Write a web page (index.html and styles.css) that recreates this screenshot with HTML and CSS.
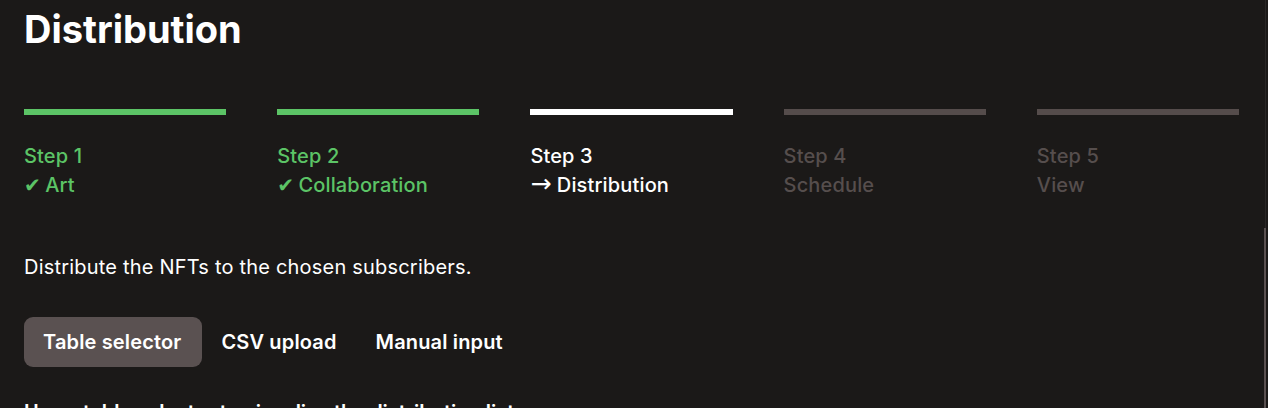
FILE: index.html
```html
<!DOCTYPE html>
<html lang="en">
<head>
<meta charset="utf-8">
<title>Distribution</title>
<link rel="stylesheet" href="styles.css">
</head>
<body>
<main class="page">
  <h1 class="title">Distribution</h1>
  <ol class="steps">
    <li class="step done">
      <span class="bar"></span>
      <span class="label">Step 1</span>
      <span class="name"><span class="mark">✔</span> Art</span>
    </li>
    <li class="step done">
      <span class="bar"></span>
      <span class="label">Step 2</span>
      <span class="name"><span class="mark">✔</span> Collaboration</span>
    </li>
    <li class="step current">
      <span class="bar"></span>
      <span class="label">Step 3</span>
      <span class="name"><span class="arrow">→</span> Distribution</span>
    </li>
    <li class="step todo">
      <span class="bar"></span>
      <span class="label">Step 4</span>
      <span class="name">Schedule</span>
    </li>
    <li class="step todo">
      <span class="bar"></span>
      <span class="label">Step 5</span>
      <span class="name">View</span>
    </li>
  </ol>
  <p class="desc">Distribute the NFTs to the chosen subscribers.</p>
  <div class="tabs">
    <button class="tab active">Table selector</button>
    <button class="tab">CSV upload</button>
    <button class="tab">Manual input</button>
  </div>
  <p class="hint">Use a table selector to visualize the distribution list.</p>
</main>
<div class="scrollbar"><div class="thumb"></div></div>
</body>
</html>
```
FILE: styles.css
```css
html, body {
  margin: 0;
  padding: 0;
  background: #1b1918;
  overflow: hidden;
}
body {
  font-family: Inter, "Liberation Sans", sans-serif;
  color: #ffffff;
  height: 408px;
}
.page {
  padding: 5px 29px 0 24px;
}
.title {
  margin: 0;
  font-size: 38px;
  line-height: 48px;
  font-weight: 700;
}
.steps {
  list-style: none;
  margin: 56px 0 0 0;
  padding: 0;
  display: grid;
  grid-template-columns: repeat(5, 1fr);
  column-gap: 51px;
}
.step {
  display: flex;
  flex-direction: column;
  font-size: 20px;
  line-height: 29px;
  font-weight: 500;
  letter-spacing: 0.15px;
}
.bar {
  display: block;
  height: 6px;
  margin-bottom: 27px;
}
.done { color: #5cc466; }
.done .bar { background: #5cc466; }
.current { color: #ffffff; }
.current .bar { background: #ffffff; }
.todo { color: #564e4d; }
.todo .bar { background: #554c4b; }
.mark {
  font-family: "DejaVu Sans", sans-serif;
  font-size: 20px;
  line-height: 1;
  letter-spacing: -1px;
}
.arrow {
  font-family: "DejaVu Sans", sans-serif;
  font-size: 25px;
  font-weight: 400;
  line-height: 1;
  letter-spacing: 0;
}
.desc {
  margin: 53px 0 0 0;
  font-size: 20px;
  line-height: 29px;
  font-weight: 400;
  letter-spacing: 0.2px;
}
.tabs {
  display: flex;
  margin-top: 35px;
}
.tab {
  font-family: Inter, "Liberation Sans", sans-serif;
  font-size: 20px;
  line-height: 28px;
  font-weight: 600;
  letter-spacing: 0.15px;
  color: #ffffff;
  background: transparent;
  border: none;
  border-radius: 9px;
  padding: 11px 20px 11px 19px;
  margin: 0;
}
.tab.active {
  background: #5a5151;
  padding-right: 21px;
}
.hint {
  margin: 31px 0 0 0;
  font-size: 20px;
  line-height: 29px;
  font-weight: 600;
}
.scrollbar {
  position: fixed;
  top: 0;
  right: 2px;
  width: 1px;
  height: 408px;
  background: #2a2726;
}
.thumb {
  position: absolute;
  top: 228px;
  right: 0;
  width: 2px;
  height: 180px;
  background: #5a5151;
}
```
